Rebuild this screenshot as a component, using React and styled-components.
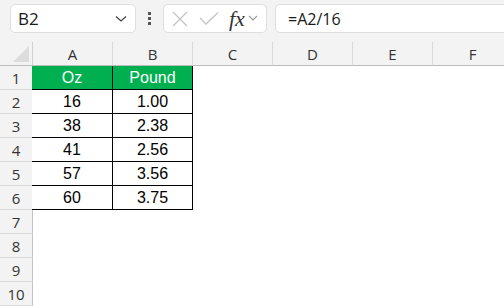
import React from "react";
import styled, { createGlobalStyle } from "styled-components";

const rows = [
  { oz: "16", lb: "1.00" },
  { oz: "38", lb: "2.38" },
  { oz: "41", lb: "2.56" },
  { oz: "57", lb: "3.56" },
  { oz: "60", lb: "3.75" },
];

const columns = ["A", "B", "C", "D", "E", "F"];

function Chevron() {
  return (
    <svg width="12" height="8" viewBox="0 0 12 8">
      <path d="M1 1.5 L6 6 L11 1.5" fill="none" stroke="#444" strokeWidth="1.3" />
    </svg>
  );
}

function App() {
  return (
    <>
      <GlobalStyle />
      <Sheet>
        <Toolbar>
          <NameBox>
            <span>B2</span>
            <Chevron />
          </NameBox>
          <Grip>
            <i />
            <i />
            <i />
          </Grip>
          <FxBox>
            <svg width="16" height="16" viewBox="0 0 16 16">
              <path d="M1 1 L15 15 M15 1 L1 15" stroke="#c4c4c4" strokeWidth="1.3" />
            </svg>
            <svg width="20" height="15" viewBox="0 0 20 15">
              <path d="M1 7 L7 13 L19 1.5" fill="none" stroke="#c4c4c4" strokeWidth="1.3" />
            </svg>
            <FxLabel>fx</FxLabel>
            <SmallChevron>
              <svg width="10" height="7" viewBox="0 0 10 7">
                <path d="M1 1 L5 5 L9 1" fill="none" stroke="#9a9a9a" strokeWidth="1.1" />
              </svg>
            </SmallChevron>
          </FxBox>
          <FormulaInput>=A2/16</FormulaInput>
        </Toolbar>

        <Grid>
          <Corner>
            <Triangle />
          </Corner>
          {columns.map((c) => (
            <ColHeader key={c}>{c}</ColHeader>
          ))}

          <RowHeader>1</RowHeader>
          <DataCell $head $first>Oz</DataCell>
          <DataCell $head>Pound</DataCell>
          {columns.slice(2).map((c) => (
            <Empty key={c} />
          ))}

          {rows.map((r, i) => (
            <React.Fragment key={i}>
              <RowHeader>{i + 2}</RowHeader>
              <DataCell $first>{r.oz}</DataCell>
              <DataCell>{r.lb}</DataCell>
              {columns.slice(2).map((c) => (
                <Empty key={c} />
              ))}
            </React.Fragment>
          ))}

          {[7, 8, 9, 10].map((n) => (
            <React.Fragment key={n}>
              <RowHeader>{n}</RowHeader>
              {columns.map((c) => (
                <Empty key={c} />
              ))}
            </React.Fragment>
          ))}
        </Grid>
      </Sheet>
    </>
  );
}

export default App;

const GlobalStyle = createGlobalStyle`
  html, body { margin: 0; padding: 0; background: #fff; }
  body { overflow: hidden; }
`;

const Sheet = styled.div`
  width: 504px;
  height: 306px;
  overflow: hidden;
  font-family: "Open Sans", "Noto Sans", sans-serif;
`;

// barre de formule
const Toolbar = styled.div`
  display: flex;
  align-items: center;
  height: 42px;
  padding: 0 0 5px 10px;
  box-sizing: border-box;
  background: #f3f3f3;
  width: 560px;
`;

const NameBox = styled.div`
  display: flex;
  align-items: center;
  justify-content: space-between;
  width: 126px;
  height: 29px;
  box-sizing: border-box;
  padding: 0 8px 0 7px;
  background: #fff;
  border: 1px solid #dedede;
  border-radius: 5px;
  font-size: 17px;
  color: #1a1a1a;
`;

const Grip = styled.div`
  display: flex;
  flex-direction: column;
  gap: 2px;
  width: 27px;
  align-items: center;
  i {
    display: block;
    width: 3px;
    height: 3px;
    background: #555;
  }
`;

const FxBox = styled.div`
  display: flex;
  align-items: center;
  gap: 11px;
  width: 104px;
  height: 29px;
  box-sizing: border-box;
  padding: 0 0 0 8px;
  background: #fff;
  border: 1px solid #dedede;
  border-radius: 5px;
`;

const FxLabel = styled.span`
  font-family: "Liberation Serif", serif;
  font-style: italic;
  font-size: 22px;
  line-height: 1;
  color: #333;
  margin-left: -1px;
`;

const SmallChevron = styled.span`
  display: flex;
  margin-left: -8px;
`;

const FormulaInput = styled.div`
  display: flex;
  align-items: center;
  margin-left: 8px;
  flex: 1;
  height: 29px;
  box-sizing: border-box;
  padding-left: 12px;
  background: #fff;
  border: 1px solid #dedede;
  border-radius: 5px;
  font-size: 16px;
  color: #1a1a1a;
`;

// grille
const Grid = styled.div`
  display: grid;
  grid-template-columns: 33px repeat(6, 80px);
  grid-auto-rows: 24px;
  width: 513px;
`;

const Corner = styled.div`
  position: relative;
  background: #f3f3f3;
  border-right: 1px solid #d0d0d0;
  border-bottom: 1px solid #bdbdbd;
`;

const Triangle = styled.div`
  position: absolute;
  right: 3px;
  bottom: 3px;
  width: 0;
  height: 0;
  border-left: 16px solid transparent;
  border-bottom: 16px solid #dcdcdc;
`;

const ColHeader = styled.div`
  display: flex;
  align-items: center;
  justify-content: center;
  background: #f3f3f3;
  border-right: 1px solid #dadada;
  border-bottom: 1px solid #bdbdbd;
  font-size: 15px;
  color: #333;
`;

const RowHeader = styled.div`
  display: flex;
  align-items: center;
  justify-content: center;
  background: #f3f3f3;
  border-right: 1px solid #c4c4c4;
  border-bottom: 1px solid #dcdcdc;
  font-size: 15px;
  color: #333;
`;

const DataCell = styled.div`
  display: flex;
  align-items: center;
  justify-content: center;
  font-family: "Liberation Sans", Arial, sans-serif;
  font-size: 16px;
  color: ${(p) => (p.$head ? "#fff" : "#000")};
  background: ${(p) => (p.$head ? "#00b050" : "#fff")};
  border-right: 1px solid #000;
  border-bottom: 1px solid #000;
  margin-left: ${(p) => (p.$first ? "-1px" : "0")};
`;

const Empty = styled.div`
  background: #fff;
`;
